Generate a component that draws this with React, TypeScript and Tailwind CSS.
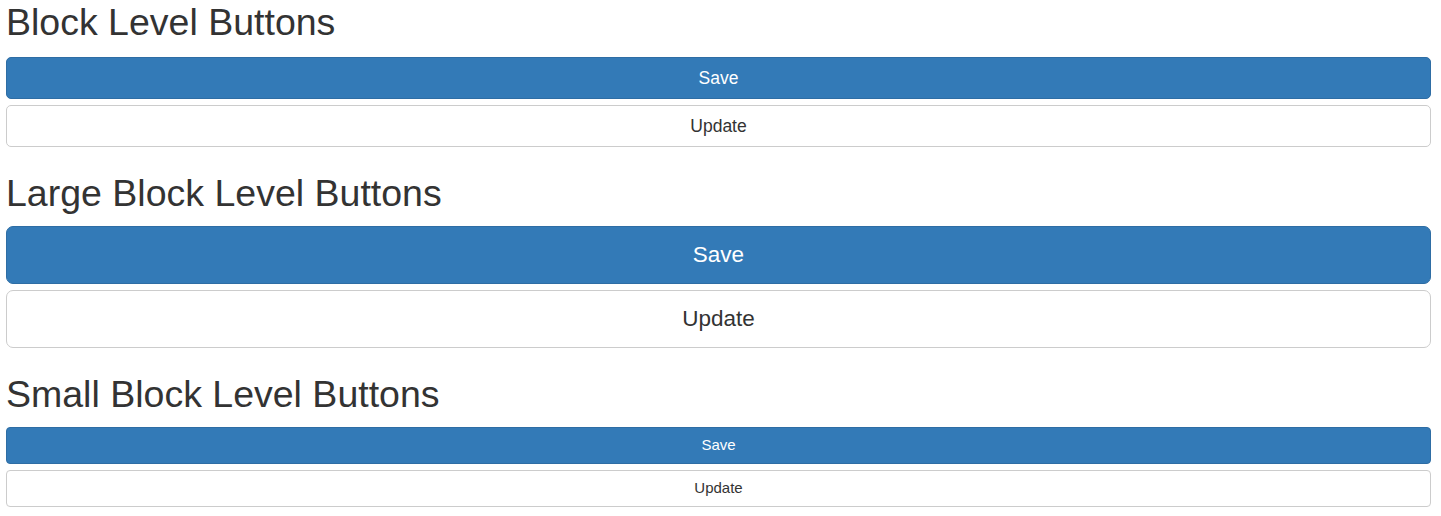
const font = { fontFamily: '"Liberation Sans", Arial, sans-serif' };

type Size = 'md' | 'lg' | 'sm';

const sizeClass: Record<Size, string> = {
  md: 'h-[42px] text-[17.5px] rounded-[5px]',
  lg: 'h-[58px] text-[22.5px] rounded-[7px]',
  sm: 'h-[37px] text-[15px] rounded-[4px]',
};

const BlockButton = ({ label, primary, size }: { label: string; primary?: boolean; size: Size }) => (
  <button
    className={`w-full flex items-center justify-center border ${sizeClass[size]} ${
      primary ? 'bg-[#337ab7] border-[#2e6da4] text-white' : 'bg-white border-[#cccccc] text-[#333333]'
    }`}
  >
    {label}
  </button>
);

const Section = ({ title, size, first }: { title: string; size: Size; first?: boolean }) => (
  <div className="flex flex-col">
    <h2
      className={`text-[37.5px] leading-[41px] font-normal text-[#333333] ${
        first ? 'mt-[2px] mb-[14px]' : 'mt-[26px] mb-[12px]'
      }`}
    >
      {title}
    </h2>
    <div className="flex flex-col gap-[6px]">
      <BlockButton label="Save" primary size={size} />
      <BlockButton label="Update" size={size} />
    </div>
  </div>
);

export default function App() {
  return (
    <div className="bg-white w-[1441px] h-[516px] pl-[6px] pr-[10px]" style={font}>
      <Section title="Block Level Buttons" size="md" first />
      <Section title="Large Block Level Buttons" size="lg" />
      <Section title="Small Block Level Buttons" size="sm" />
    </div>
  );
}
